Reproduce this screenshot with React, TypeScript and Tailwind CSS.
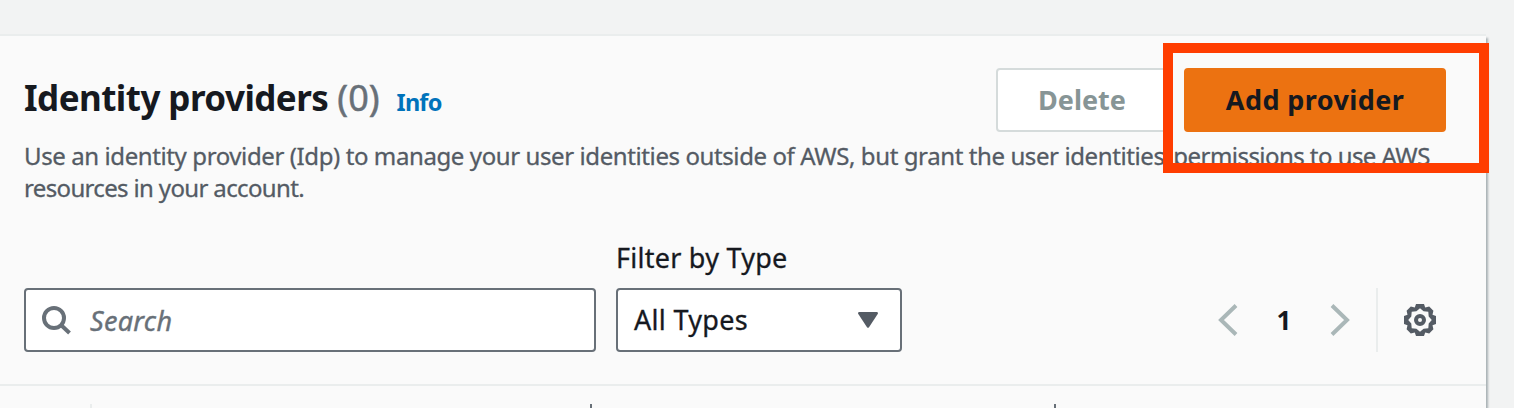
import type { ReactNode } from "react";

function Button({ className, children }: { className: string; children: ReactNode }) {
  return (
    <button
      type="button"
      className={`flex h-16 items-center justify-center rounded-[4px] border-2 pt-px text-[27px] font-bold whitespace-nowrap ${className}`}
    >
      {children}
    </button>
  );
}

function SearchIcon() {
  return (
    <svg className="size-8 shrink-0 text-[#687078]" viewBox="0 0 32 32" fill="none" stroke="currentColor" strokeWidth="4">
      <circle cx="14" cy="14" r="10" />
      <path d="m21 21 8.500 8" />
    </svg>
  );
}

function GearIcon() {
  return (
    <svg className="size-8 text-[#545b64]" viewBox="0 0 32 32" fill="currentColor" fillRule="evenodd">
      <path d="M12 0H20L21.200 3.500L25.200 2.600L29.400 6.800L28.500 10.800L32 12V20L28.500 21.200L29.400 25.200L25.200 29.400L21.200 28.500L20 32H12L10.800 28.500L6.800 29.400L2.600 25.200L3.500 21.200L0 20V12L3.500 10.800L2.600 6.800L6.800 2.600L10.800 3.500ZM16 4.200L12.400 7.300L7.700 7.700L7.300 12.400L4.200 16L7.300 19.600L7.700 24.300L12.400 24.700L16 27.800L19.600 24.700L24.300 24.300L24.700 19.600L27.800 16L24.700 12.400L24.300 7.700L19.600 7.300Z" />
      <circle cx="16" cy="16" r="4" fill="none" stroke="currentColor" strokeWidth="4" />
    </svg>
  );
}

function Chevron({ d }: { d: string }) {
  return (
    <svg className="h-8 w-5 text-[#aab7b8]" viewBox="0 0 20 32" fill="none" stroke="currentColor" strokeWidth="4">
      <path d={d} />
    </svg>
  );
}

export default function App() {
  return (
    <div className="h-[408px] w-[1514px] overflow-hidden bg-[#f2f3f3] pt-[34px] font-['Noto_Sans',sans-serif] text-[#16191f]">
      <section className="relative flex h-[600px] w-[1486px] flex-col border-t-2 border-[#eaeded] bg-[#fafafa] shadow-[2px_4px_2px_0_rgba(0,28,36,0.3)]">
        <header className="flex h-[68px] items-end justify-between pr-10 pl-6">
          <div className="flex h-[68px] items-baseline whitespace-nowrap pt-[38px]">
            <h1 className="text-[35px] leading-[48px] font-bold tracking-[-0.55px]">Identity providers</h1>
            <span className="ml-[9px] text-[36px] leading-[48px] text-[#687078] [-webkit-text-stroke:0.5px]">(0)</span>
            <a className="ml-[17px] text-[23.500px] leading-[48px] font-bold tracking-[-0.8px] text-[#0073bb]">Info</a>
          </div>
          <div className="flex h-9 gap-4">
            <Button className="w-[172px] border-[#d5dbdb] bg-white text-[#879596]">Delete</Button>
            <Button className="w-[262px] border-[#ec7211] bg-[#ec7211] tracking-[0.4px]">Add provider</Button>
          </div>
        </header>
        <p className="mt-9 h-16 pl-6 text-[24px] leading-8 tracking-[-0.4px] whitespace-nowrap text-[#545b64] [-webkit-text-stroke:0.3px]">
          Use an identity provider (Idp) to manage your user identities outside of AWS, but grant the user identities{" "}
          <span className="ml-[3px] tracking-[-0.55px]">permissions to use AWS</span>
          <br />
          <span className="tracking-[-0.65px]">resources in your account.</span>
        </p>
        <div className="mt-9 flex items-end pr-[50px] pl-6">
          <label className="flex h-16 w-[572px] items-center rounded-[4px] border-2 border-[#687078] bg-white pl-[14px]">
            <SearchIcon />
            <span className="mt-0.5 ml-[18px] text-[27px] tracking-[0.3px] text-[#687078] italic [-webkit-text-stroke:0.4px]">Search</span>
          </label>
          <div className="ml-5 flex w-[286px] flex-col">
            <span className="mb-3 text-[27px] leading-9 tracking-[0.25px] [-webkit-text-stroke:0.3px]">Filter by Type</span>
            <div className="flex h-16 items-center justify-between rounded-[4px] border-2 border-[#687078] bg-white pr-[22px] pl-4 text-[27px] tracking-[0.3px] [-webkit-text-stroke:0.3px]">
              <span>All Types</span>
              <svg className="h-4 w-5 text-[#545b64]" viewBox="0 0 20 16" fill="currentColor">
                <path d="M1 0h18q1.500 .6.7 2L11 15.200q-1 1.200-2 0L.3 2Q-.5.6 1 0Z" />
              </svg>
            </div>
          </div>
          <nav className="ml-auto flex h-16 items-center">
            <Chevron d="M18 1.500 3 16l15 14.500" />
            <span className="w-[92px] text-center text-[26px] font-bold">1</span>
            <Chevron d="M2 1.500 17 16 2 30.500" />
            <span className="mr-[26px] ml-[26px] h-16 w-0.5 bg-[#eaeded]" />
            <GearIcon />
          </nav>
        </div>
        <div className="mt-8 h-0.5 shrink-0 bg-[#eaeded]" />
        <div className="mt-[18px] flex h-8">
          <span className="ml-[90px] w-0.5 bg-[#eaeded]" />
          <span className="ml-[498px] w-0.5 bg-[#687078]" />
          <span className="ml-[462px] w-0.5 bg-[#687078]" />
        </div>
        <div className="absolute top-[7px] left-[1163px] h-[130px] w-[326px] border-[10px] border-[#ff3d00]" />
      </section>
    </div>
  );
}
